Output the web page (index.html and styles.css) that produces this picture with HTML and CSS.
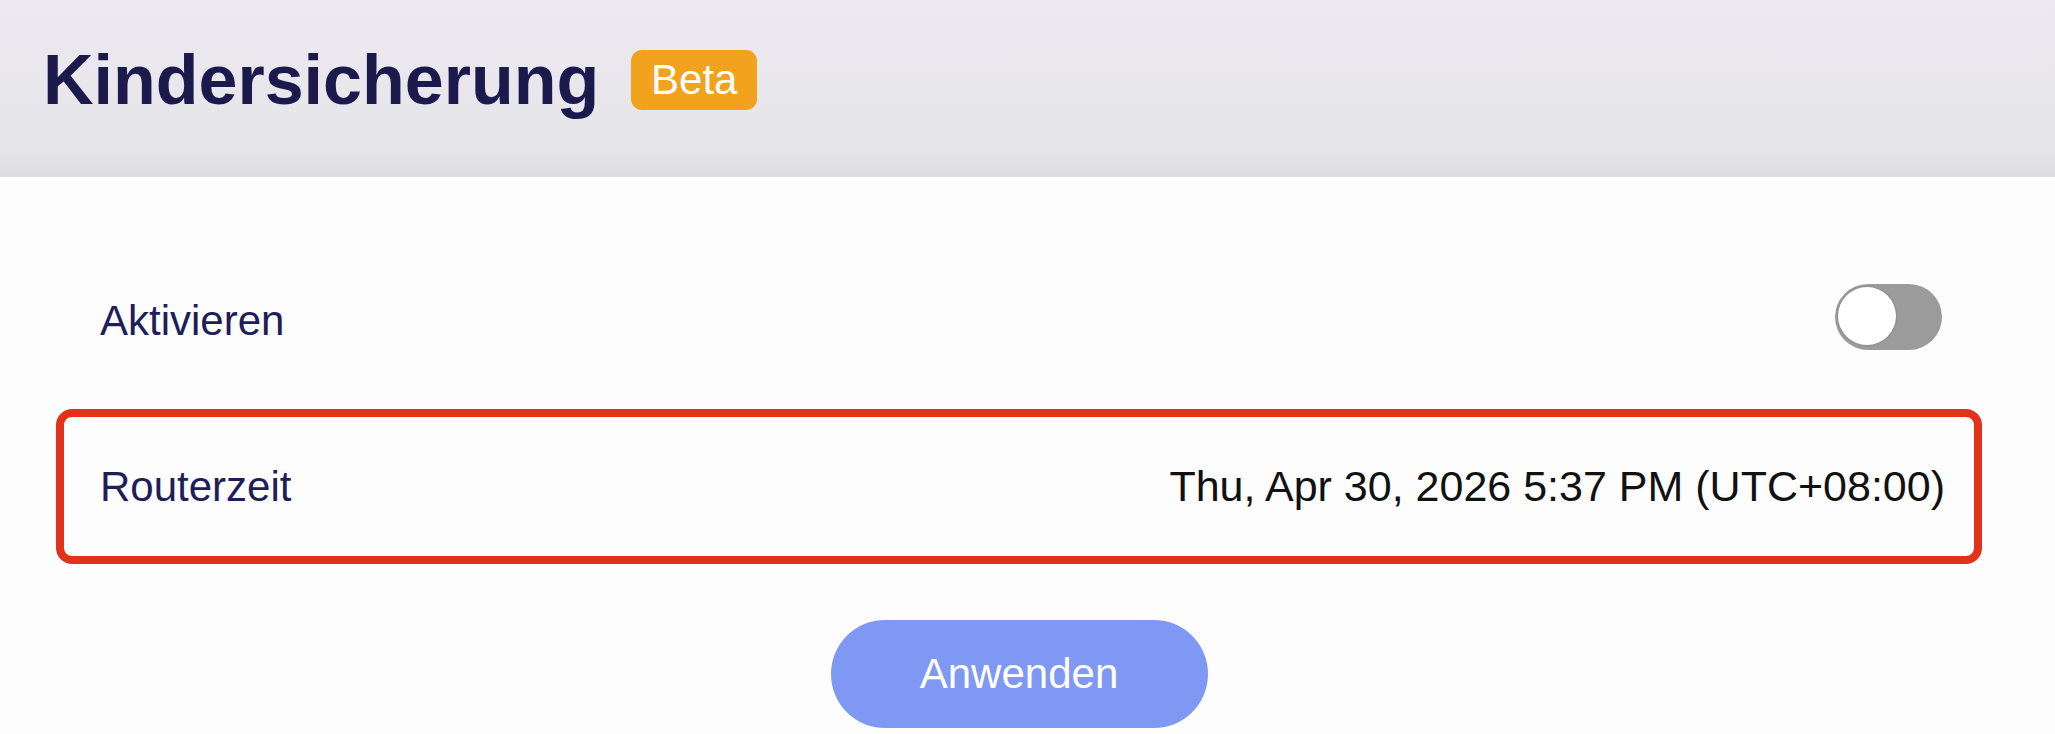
FILE: index.html
```html
<!DOCTYPE html>
<html lang="de">
<head>
<meta charset="UTF-8">
<title>Kindersicherung</title>
<link rel="stylesheet" href="styles.css">
</head>
<body>
  <header class="page-head">
    <h1>Kindersicherung</h1>
    <span class="badge">Beta</span>
  </header>
  <main class="panel">
    <div class="row">
      <span class="label label-low">Aktivieren</span>
      <label class="switch">
        <input type="checkbox">
        <span class="knob"></span>
      </label>
    </div>
    <div class="row row-marked">
      <span class="label">Routerzeit</span>
      <span class="value">Thu, Apr 30, 2026 5:37 PM (UTC+08:00)</span>
    </div>
    <div class="actions">
      <button class="btn-apply" type="button">Anwenden</button>
    </div>
  </main>
</body>
</html>
```

FILE: styles.css
```css
body {
  margin: 0;
  font-family: "Liberation Sans", Arial, sans-serif;
  background-color: #fdfdfd;
}

.page-head {
  height: 177px;
  display: flex;
  align-items: center;
  padding: 0 0 18px 43px;
  box-sizing: border-box;
  background: linear-gradient(#eceaf0, #e6e5ea 85%, #dddce2);
}

.page-head h1 {
  margin: 0;
  font-size: 70px;
  font-weight: bold;
  color: #1c1a4d;
}

.badge {
  margin-left: 32px;
  width: 126px;
  height: 60px;
  display: flex;
  align-items: center;
  justify-content: center;
  background-color: #f2a21d;
  color: #fff;
  font-size: 42px;
  border-radius: 11px;
}

.panel {
  padding: 80px 73px 0 56px;
}

.row {
  height: 120px;
  display: flex;
  justify-content: space-between;
  align-items: center;
  padding: 0 40px 0 44px;
}

.label {
  font-size: 42px;
  color: #201d58;
}

.label-low {
  padding-top: 8px;
}

.value {
  font-size: 43px;
  color: #111;
}

.row-marked {
  margin-top: 32px;
  height: 155px;
  box-sizing: border-box;
  border: 8px solid #e2321a;
  border-radius: 16px;
  padding: 0 29px 0 36px;
}

.switch {
  position: relative;
  width: 107px;
  height: 66px;
  border-radius: 33px;
  background-color: #9b9b9b;
  cursor: pointer;
}

.switch input {
  display: none;
}

.knob {
  position: absolute;
  left: 3px;
  top: 3px;
  width: 58px;
  height: 58px;
  border-radius: 50%;
  background: radial-gradient(circle, #fff 70%, #ececec);
  box-shadow: 0 0 2px rgba(0, 0, 0, 0.3);
}

.actions {
  display: flex;
  justify-content: center;
  margin-top: 56px;
}

.btn-apply {
  width: 377px;
  height: 108px;
  border: none;
  border-radius: 54px;
  background-color: #7f98f4;
  color: #fff;
  font-family: inherit;
  font-size: 42px;
}
```
